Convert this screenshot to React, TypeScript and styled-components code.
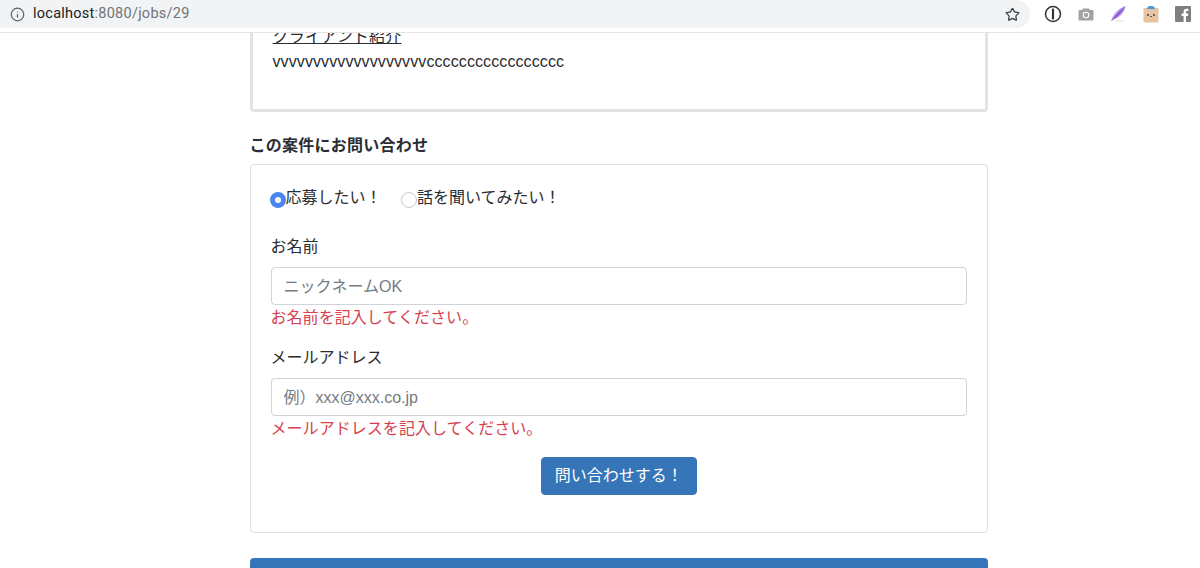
import { createGlobalStyle, styled } from "styled-components";
import { Info, Star } from "lucide-react";

const GlobalStyle = createGlobalStyle`
    html, body {
        margin: 0;
        height: 568px;
        overflow: hidden;
        background: #fff;
    }
    body {
        font-family: "Liberation Sans", "Noto Sans CJK JP", sans-serif;
        font-size: 16px;
        line-height: 24px;
        color: #2a2d31;
    }
`;

const Toolbar = styled.header`
    height: 33px;
    box-sizing: border-box;
    display: flex;
    align-items: flex-start;
    background: #fff;
    border-bottom: 1px solid #e4e4e4;
`;

const Omnibox = styled.div`
    width: 1030px;
    height: 28px;
    box-sizing: border-box;
    padding-left: 10px;
    display: flex;
    align-items: center;
    gap: 8px;
    background: #f1f3f4;
    border-radius: 0 14px 14px 0;
    color: #5f6368;
    font-size: 14.5px;
    svg {
        flex: none;
    }
`;

const Url = styled.span`
    flex: 1;
    color: #70757a;
    font-family: "Roboto", "Liberation Sans", sans-serif;
    letter-spacing: 0.25px;
    b {
        font-weight: 400;
        color: #202124;
    }
`;

const StarButton = styled.span`
    display: flex;
    margin-right: 10px;
    color: #3c4043;
`;

const Extensions = styled.div`
    display: flex;
    align-items: center;
    height: 28px;
    margin-left: 14px;
    gap: 16px;
    svg {
        display: block;
    }
`;

const Viewport = styled.main`
    height: 535px;
    overflow: hidden;
`;

const Column = styled.div`
    width: 738.5px;
    margin: -8px 0 0 249.5px;
`;

const ProfileCard = styled.section`
    height: 84px;
    padding: 0 20px;
    border: 3px solid #e2e3e4;
    border-top: none;
    border-radius: 0 0 4px 4px;
`;

const ProfileTitle = styled.div`
    height: 24px;
    line-height: 24px;
    font-size: 16px;
    letter-spacing: 0.2px;
    text-decoration: underline;
    text-underline-offset: 1px;
`;

const ProfileBody = styled.div`
    height: 24px;
    margin-top: 1px;
    letter-spacing: 0.1px;
`;

const SectionTitle = styled.h2`
    margin: 22px 0 6px;
    font-size: 16px;
    line-height: 24px;
    font-weight: 700;
    letter-spacing: 0.25px;
`;

const FormCard = styled.form`
    height: 369px;
    box-sizing: border-box;
    padding: 21px 20px 0;
    border: 1px solid #dfe0e1;
    border-radius: 4px;
`;

const RadioRow = styled.div`
    display: flex;
    gap: 19.5px;
    height: 24px;
    margin: 0 0 25px -1px;
`;

const RadioLabel = styled.label`
    display: flex;
    align-items: center;
`;

const Radio = styled.input.attrs({ type: "radio", name: "kind" })`
    appearance: none;
    width: 16px;
    height: 16px;
    margin: 3px 0 0;
    box-sizing: border-box;
    border-radius: 50%;
    border: 1px solid #c9c9c9;
    background: #fff;
    &:checked {
        border: 5px solid #4a86f0;
    }
`;

const Field = styled.div`
    margin-bottom: 16px;
`;

const Label = styled.label`
    display: block;
    height: 24px;
    margin-bottom: 8px;
`;

const TextInput = styled.input`
    display: block;
    width: 100%;
    height: 38px;
    box-sizing: border-box;
    padding: 7px 12px 5px;
    font: inherit;
    border: 1px solid #ced4da;
    border-radius: 4px;
    background: #fff;
    &::placeholder {
        color: #737b83;
        opacity: 1;
    }
`;

const ErrorText = styled.div`
    height: 24px;
    margin-top: 1px;
    color: #d8404f;
    letter-spacing: 0.05px;
`;

const Actions = styled.div`
    display: flex;
    justify-content: center;
    margin-top: 16px;
`;

const SubmitButton = styled.button`
    height: 38px;
    padding: 0 13px;
    font: inherit;
    color: #fff;
    background: #3775b9;
    border: 1px solid #3775b9;
    border-radius: 4px;
`;

const BottomBar = styled.div`
    height: 40px;
    margin-top: 25px;
    background: #3775b9;
    border-radius: 4px 4px 0 0;
`;

const OnePassword = () => (
    <svg width="18" height="18" viewBox="0 0 18 18">
        <circle cx="9" cy="9" r="7.5" fill="#fff" stroke="#333" strokeWidth="1.5" />
        <rect x="7.9" y="3.5" width="2.2" height="11" rx="1" fill="#333" />
    </svg>
);

const Camera = () => (
    <svg width="16" height="14" viewBox="0 0 16 14">
        <path
            d="M5 1.5h6l1 1.5h2.5a1 1 0 0 1 1 1v8.5a1 1 0 0 1-1 1h-13a1 1 0 0 1-1-1V4a1 1 0 0 1 1-1H4z"
            fill="#a2a2a2"
        />
        <circle cx="8" cy="8" r="3.3" fill="#fff" />
        <circle cx="8" cy="8" r="2.2" fill="#a2a2a2" />
    </svg>
);

const Quill = () => (
    <svg width="17" height="18" viewBox="0 0 17 18">
        <path d="M1 16.5C3 9 9 3 15.5 1 14.5 7 10 13 3.5 14z" fill="#b794e8" />
        <path d="M1 16.5C5 11 9 7 15.5 1 13 6 8 11 1 16.5z" fill="#7a4bcc" />
        <path d="M4 16c4-1.5 8-1.5 11 0-4 .8-8 .8-11 0z" fill="#e2e2e2" />
    </svg>
);

const BoxFace = () => (
    <svg width="16" height="18" viewBox="0 0 16 18">
        <rect x="0.5" y="3" width="15" height="14.5" rx="1" fill="#e8c4a2" />
        <path d="M4 4C4 1.5 6 1 8 1s4 .5 4 3z" fill="#4a9ae0" />
        <circle cx="5" cy="10" r="0.9" fill="#333" />
        <circle cx="11" cy="10" r="0.9" fill="#333" />
        <rect x="7.2" y="11" width="1.6" height="0.9" fill="#333" />
    </svg>
);

const Facebook = () => (
    <svg width="16" height="16" viewBox="0 0 16 16">
        <rect width="16" height="16" rx="1" fill="#7f7f7f" />
        <path
            d="M11 16v-6h2l.3-2.4H11V6.200c0-.7.2-1.200 1.200-1.200h1.200V2.900c-.6-.1-1.200-.1-1.800-.1-1.900 0-3 1.100-3 3.100v1.700h-2V10h2v6z"
            fill="#fff"
        />
    </svg>
);

const App = () => {
    return (
        <>
            <GlobalStyle />
            <Toolbar>
                <Omnibox>
                    <Info size={15} strokeWidth={2} />
                    <Url>
                        <b>localhost</b>:8080/jobs/29
                    </Url>
                    <StarButton>
                        <Star size={15} strokeWidth={2} />
                    </StarButton>
                </Omnibox>
                <Extensions>
                    <OnePassword />
                    <Camera />
                    <Quill />
                    <BoxFace />
                    <Facebook />
                </Extensions>
            </Toolbar>
            <Viewport>
                <Column>
                    <ProfileCard>
                        <ProfileTitle>クライアント紹介</ProfileTitle>
                        <ProfileBody>vvvvvvvvvvvvvvvvvvvccccccccccccccccc</ProfileBody>
                    </ProfileCard>
                    <SectionTitle>この案件にお問い合わせ</SectionTitle>
                    <FormCard>
                        <RadioRow>
                            <RadioLabel>
                                <Radio defaultChecked />
                                応募したい！
                            </RadioLabel>
                            <RadioLabel>
                                <Radio />
                                話を聞いてみたい！
                            </RadioLabel>
                        </RadioRow>
                        <Field>
                            <Label>お名前</Label>
                            <TextInput placeholder="ニックネームOK" />
                            <ErrorText>お名前を記入してください。</ErrorText>
                        </Field>
                        <Field>
                            <Label>メールアドレス</Label>
                            <TextInput placeholder="例）xxx@xxx.co.jp" />
                            <ErrorText>メールアドレスを記入してください。</ErrorText>
                        </Field>
                        <Actions>
                            <SubmitButton type="button">問い合わせする！</SubmitButton>
                        </Actions>
                    </FormCard>
                    <BottomBar />
                </Column>
            </Viewport>
        </>
    );
};

export default App;
